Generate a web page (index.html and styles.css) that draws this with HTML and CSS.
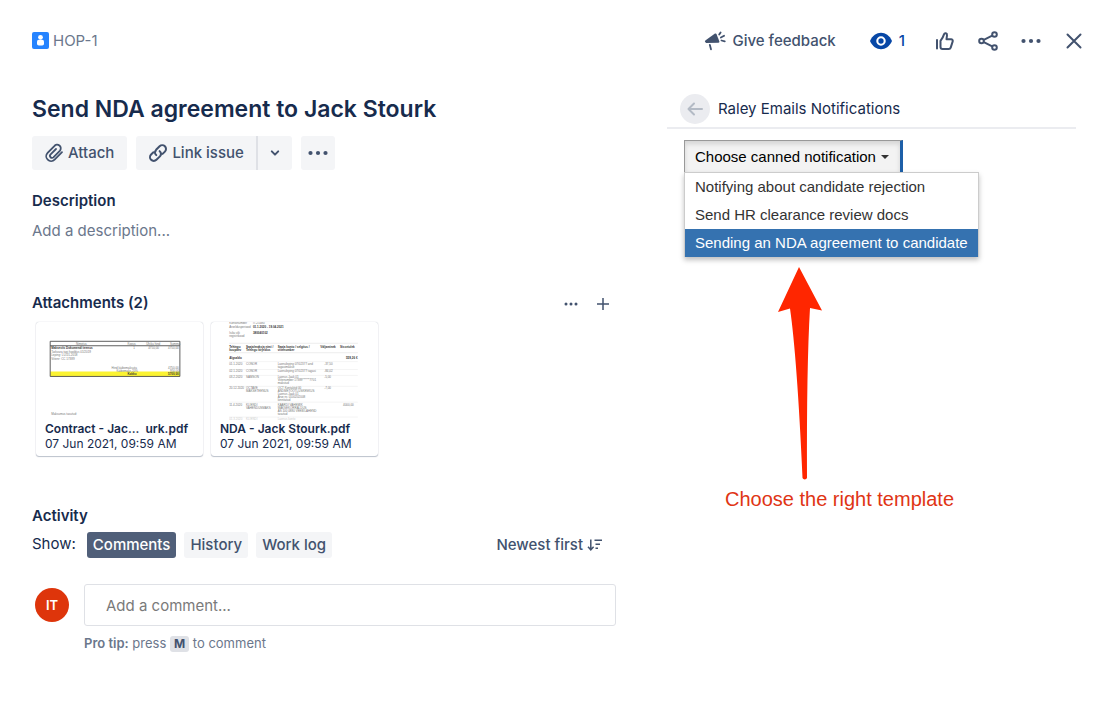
FILE: index.html
```html
<!DOCTYPE html>
<html lang="en">
<head>
<meta charset="utf-8">
<title>HOP-1 Send NDA agreement to Jack Stourk</title>
<link rel="stylesheet" href="styles.css">
</head>
<body>
<header class="topbar">
  <a class="issue-key" href="#">
    <svg width="17" height="17" viewBox="0 0 17 17"><rect width="17" height="17" rx="2" fill="#2684ff"/><circle cx="8.500" cy="5.300" r="2.400" fill="#fff"/><rect x="5" y="7.800" width="7" height="5.800" rx="1.800" fill="#fff"/></svg>
    HOP-1
  </a>
  <nav class="actions">
    <button class="plain feedback">
      <svg width="22" height="22" viewBox="0 0 22 22" fill="none" stroke="#42526e" stroke-width="1.800" stroke-linecap="round"><path d="M1.300 10.600 11 3.600Q12 3 12.500 4.100L15.400 11.500Q15.700 12.600 14.500 12.700L2.200 13.100Q0 12 1.300 10.600z" fill="#42526e" stroke="none"/><path d="M5.800 14.800 7 19.300M15.200 4.600l1.400-2.200M16.900 7.500l3.200-1.700M17.500 10.500l3.300.8"/></svg>
      Give feedback
    </button>
    <button class="plain watch" aria-label="1 watcher">
      <svg width="24" height="24" viewBox="0 0 24 24"><path d="M1 12C3.500 6.500 7.500 3.800 12 3.800S20.500 6.500 23 12C20.500 17.500 16.500 20.200 12 20.200S3.500 17.500 1 12z" fill="#0747a6"/><circle cx="12" cy="12" r="3.700" fill="none" stroke="#fff" stroke-width="2.100"/></svg>
      1
    </button>
    <button class="plain" aria-label="Like">
      <svg width="24" height="24" viewBox="0 0 24 24" fill="none" stroke="#42526e" stroke-width="2" stroke-linecap="round" stroke-linejoin="round"><path d="M4 11v8.500M7.500 11.800v6.200a2 2 0 0 0 2 2h6.300a2 2 0 0 0 1.900-1.400l2-6.200a1.700 1.700 0 0 0-1.600-2.200h-4.600l.5-3.900c.3-2.300-2.400-2.800-3-.9-.6 2-1.500 3.900-3.500 6.400z"/></svg>
    </button>
    <button class="plain" aria-label="Share">
      <svg width="24" height="24" viewBox="0 0 24 24" fill="none" stroke="#42526e" stroke-width="2"><circle cx="5.500" cy="12" r="2.300"/><circle cx="18.500" cy="5.500" r="2.300"/><circle cx="18.500" cy="18.500" r="2.300"/><path d="M7.800 10.900 16.200 6.700M7.800 13.100l8.400 4.200"/></svg>
    </button>
    <button class="plain" aria-label="More actions">
      <svg width="24" height="24" viewBox="0 0 24 24" fill="#42526e"><circle cx="4.500" cy="12" r="2.100"/><circle cx="12" cy="12" r="2.100"/><circle cx="19.500" cy="12" r="2.100"/></svg>
    </button>
    <button class="plain" aria-label="Close">
      <svg width="24" height="24" viewBox="0 0 24 24" fill="none" stroke="#42526e" stroke-width="2" stroke-linecap="round"><path d="M5.500 5.500l13 13M18.500 5.500l-13 13"/></svg>
    </button>
  </nav>
</header>

<div class="columns">
  <main>
    <h1>Send NDA agreement to Jack Stourk</h1>
    <div class="toolbar">
      <button class="tool">
        <svg width="20" height="20" viewBox="0 0 20 20" fill="none" stroke="#42526e" stroke-width="1.800" stroke-linecap="round"><path d="M18 9.200 10.600 16.600A4.800 4.800 0 0 1 3.600 9.800L10.300 3.100A3.500 3.500 0 0 1 16 7.600L9.400 14.300A2 2 0 0 1 6.600 11.400L12 6"/></svg>
        Attach
      </button>
      <div class="split">
        <button class="tool">
          <svg width="20" height="20" viewBox="0 0 20 20" fill="none" stroke="#42526e" stroke-width="2" stroke-linecap="round"><path d="M8.300 12.100a3.900 3.900 0 0 1-.2-5.300l3.500-3.500a3.700 3.700 0 0 1 5.300 5.300l-2.300 2.300M11.600 8.100a3.900 3.900 0 0 1 .3 5.300l-3.500 3.400a3.700 3.700 0 0 1-5.300-5.300L5.400 9.300"/></svg>
          Link issue
        </button>
        <button class="tool caret" aria-label="More link options">
          <svg width="10" height="10" viewBox="0 0 10 10" fill="none" stroke="#42526e" stroke-width="2" stroke-linecap="round" stroke-linejoin="round"><path d="M1.800 3.400 5 6.600l3.200-3.200"/></svg>
        </button>
      </div>
      <button class="tool more" aria-label="More">
        <svg width="20" height="20" viewBox="0 0 20 20" fill="#42526e"><circle cx="2.500" cy="10" r="2.100"/><circle cx="10" cy="10" r="2.100"/><circle cx="17.500" cy="10" r="2.100"/></svg>
      </button>
    </div>

    <section class="description">
      <h2>Description</h2>
      <p>Add a description...</p>
    </section>

    <section class="attachments">
      <div class="section-head">
        <h2>Attachments (2)</h2>
        <div class="section-tools">
          <button class="plain" aria-label="Attachment options"><svg width="16" height="16" viewBox="0 0 16 16" fill="#42526e"><circle cx="3" cy="9" r="1.500"/><circle cx="8" cy="9" r="1.500"/><circle cx="13" cy="9" r="1.500"/></svg></button>
          <button class="plain" aria-label="Add attachment"><svg width="16" height="16" viewBox="0 0 16 16" fill="none" stroke="#42526e" stroke-width="1.500"><path d="M8 3v12M2 9h12"/></svg></button>
        </div>
      </div>
      <div class="cards">
        <a class="card" href="#">
          <svg class="preview" viewBox="0 0 166 100" aria-hidden="true">
            <rect x="13" y="50" width="131" height="5" fill="#fbf332"/>
            <path d="M13 19.500h131v35.500H13zM13 24h131" fill="none" stroke="#4b4b4b" stroke-width=".9"/>
            <g class="tiny">
              <text x="39" y="23">Nimetus</text><text x="91" y="23">Kogus</text><text x="110" y="23">Ühiku hind</text><text x="134" y="23">Summa</text>
              <text class="strong" x="14" y="27.500">Makseviis Dokumendi teenus</text><text x="97" y="27.500">1</text><text x="112" y="27.500">4750,00</text><text x="132" y="27.500">4750,00</text>
              <text x="14" y="31">Tarkvara tugi hooldus 01/2019</text><text x="14" y="34.500">Leping: LU-01-2018</text><text x="14" y="38">Viitenr: CC 17389</text>
              <text x="75" y="47">Hind käibemaksuta</text><text x="132" y="47">4750,00</text><text x="80" y="50.500">Käibemaks 20%</text><text x="134" y="50.500">950,00</text>
              <text class="strong" x="91" y="54">Kokku</text><text class="strong" x="132" y="54">5700,00</text>
              <text x="14" y="94">Maksumus tasutud:</text>
            </g>
          </svg>
          <span class="card-text"><strong>Contract - Jac...&nbsp; urk.pdf</strong><span>07 Jun 2021, 09:59 AM</span></span>
        </a>
        <a class="card" href="#">
          <svg class="preview" viewBox="0 0 166 100" aria-hidden="true">
            <path d="M17 21.500h130M17 31h130" stroke="#ededed" fill="none"/><path d="M17 40h130M17 48h130M17 54h130M17 65h130M17 81h130M17 96h130" stroke="#f1f1f1" stroke-width=".7" fill="none"/>
            <g class="tiny">
              <text x="17" y="2">Kontonumber</text><text x="41" y="2">IT-25480</text>
              <text x="17" y="6.500">Arveldusperiood</text><text class="strong" x="41" y="6.500">01.1.2020 - 19.04.2021</text>
              <text x="17" y="12">Isiku või</text><text x="17" y="15">registrikood</text><text class="strong" x="41" y="12">380040102</text>
              <g class="strong"><text x="17" y="26">Tehingu</text><text x="17" y="29">kuupäev</text><text x="34" y="26">Saaja/maksja nimi /</text><text x="34" y="29">Tehingu kirjeldus</text><text x="66" y="26">Saaja konto / selgitus /</text><text x="66" y="29">viitenumber</text><text x="109" y="26">Väljaminek</text><text x="129" y="26">Sissetulek</text><text x="17" y="37">Algsaldo</text><text x="135" y="37">559,26 €</text></g>
              <text x="17" y="43">01.1.2020</text><text x="34" y="43">CONOR</text><text x="66" y="43">Laenuleping 07/02377 and</text><text x="66" y="46">tagasimakse</text><text x="113" y="43">-37,50</text>
              <text x="17" y="51">02.1.2020</text><text x="34" y="51">CONOR</text><text x="66" y="51">Laenuleping 07/02377 tagasi</text><text x="113" y="51">-84,02</text>
              <text x="17" y="57">03.2.2020</text><text x="34" y="57">SAMSON</text><text x="66" y="57">Laenus Jaak 01</text><text x="66" y="60">Viitenumber 17389******7701</text><text x="66" y="63">makstud</text><text x="113" y="57">-5,00</text>
              <text x="17" y="68">20.12.2020</text><text x="34" y="68">OCTAVE</text><text x="34" y="71">MAKSETEENUS</text><text x="66" y="68">OCT Kontaktid 00</text><text x="66" y="71">ANDMETÖÖTLUSKESKUS</text><text x="66" y="74">Laenus Jaak 01</text><text x="66" y="77">Arve nr. 0100202008</text><text x="66" y="80">kinnitatud</text><text x="113" y="68">-7,00</text>
              <text x="17" y="85">11.4.2020</text><text x="34" y="85">KLIENDI</text><text x="34" y="88">VAHENDUSMAKS</text><text x="66" y="85">KAARDI VAHEMIK</text><text x="66" y="88">MAKSEKORRALDUS</text><text x="66" y="91">AS 100 0880 VEEBILAHEND</text><text x="66" y="94">tasutud</text><text x="132" y="85">4000,00</text>
              <text class="faint" x="17" y="99">01.3.2020</text><text class="faint" x="34" y="99">KLIENDI</text><text class="faint" x="66" y="99">Laenus konto</text>
            </g>
          </svg>
          <span class="card-text"><strong>NDA - Jack Stourk.pdf</strong><span>07 Jun 2021, 09:59 AM</span></span>
        </a>
      </div>
    </section>

    <section class="activity">
      <h2>Activity</h2>
      <div class="filters">
        <span class="show">Show:</span>
        <button class="chip selected">Comments</button>
        <button class="chip">History</button>
        <button class="chip">Work log</button>
        <button class="plain sort">Newest first
          <svg width="16" height="16" viewBox="0 0 16 16" fill="none" stroke="#42526e" stroke-width="1.500"><path d="M3.800 2.500v10M1 9.800l2.800 3 2.800-3M7.500 3.300H15M8.500 7.300H13M8.500 11.300h2.500"/></svg>
        </button>
      </div>
      <div class="comment">
        <span class="avatar">IT</span>
        <div class="comment-body">
          <input type="text" placeholder="Add a comment..." aria-label="Add a comment">
          <p class="tip"><strong>Pro tip:</strong> press <kbd>M</kbd> to comment</p>
        </div>
      </div>
    </section>
  </main>

  <aside>
    <div class="panel-head">
      <button class="back" aria-label="Back"><svg width="18" height="18" viewBox="0 0 18 18" fill="none" stroke="#b3bac5" stroke-width="2" stroke-linecap="round" stroke-linejoin="round"><path d="M16 9H3M8 3.500 2.500 9 8 14.500"/></svg></button>
      <h3>Raley Emails Notifications</h3>
    </div>
    <div class="panel-body">
      <button class="dropdown" aria-expanded="true">Choose canned notification <span class="triangle"></span></button>
      <div class="menu">
        <button>Notifying about candidate rejection</button>
        <button>Send HR clearance review docs</button>
        <button class="active">Sending an NDA agreement to candidate</button>
      </div>
      <div class="callout">
        <svg width="46" height="214" viewBox="0 0 46 214"><path d="M22 0 45 43.500 33 41Q29.500 100 30 211a2.500 2.500 0 0 1-4.500 0Q20 90 13 41.500L1 45z" fill="#ff2600"/></svg>
        <p>Choose the right template</p>
      </div>
    </div>
  </aside>
</div>
</body>
</html>
```

FILE: styles.css
```css
* { box-sizing: border-box; }
body {
  margin: 0;
  background: #fff;
  color: #172b4d;
  font-family: Inter, "Liberation Sans", sans-serif;
  font-size: 15px;
  line-height: 20px;
}
h1, h2, h3, p { margin: 0; }
svg { display: block; flex: none; }
a { color: inherit; text-decoration: none; }
button { font: inherit; color: #42526e; border: 0; margin: 0; padding: 0; cursor: pointer; }
.plain { display: flex; align-items: center; background: none; }

.topbar { display: flex; justify-content: space-between; align-items: center; padding: 25px 14px 0 32px; height: 56px; }
.issue-key { display: flex; align-items: center; gap: 4px; color: #6b778c; }
.actions { display: flex; align-items: center; gap: 19px; }
.feedback { gap: 6px; margin-right: 14px; font-weight: 500; }
.watch { gap: 6px; padding-right: 9px; color: #0747a6; font-weight: 500; }

.columns { display: grid; grid-template-columns: 584fr 409fr; gap: 51px; padding: 37px 24px 24px 32px; }
h1 { font-size: 23px; line-height: 32px; font-weight: 600; }
h2 { font-size: 15px; line-height: 20px; font-weight: 600; }

.toolbar { display: flex; gap: 9px; margin-top: 11px; }
.tool { display: flex; align-items: center; gap: 4px; height: 34px; padding: 0 13px 0 12px; border-radius: 3px; background: #f4f5f7; font-weight: 500; }
.split { display: flex; }
.split .tool:first-child { border-radius: 3px 0 0 3px; padding-right: 12px; }
.split .caret { border-left: 2px solid #dfe1e6; border-radius: 0 3px 3px 0; padding: 0 12px; }
.tool.more { padding: 0 7px; }

.description { margin-top: 21px; }
.description p { margin-top: 10px; color: #6b778c; }

.attachments { margin-top: 52px; }
.section-head { display: flex; justify-content: space-between; padding-right: 5px; }
.section-tools { display: flex; gap: 16px; }
.cards { display: flex; gap: 8px; margin: 9px 0 0 4px; }
.card { width: 167px; height: 134px; overflow: hidden; border-radius: 3px; background: #fff; box-shadow: 0 1px 1px rgba(9, 30, 66, .25), 0 0 1px rgba(9, 30, 66, .31); font-size: 12px; line-height: 15px; }
.preview { width: 100%; height: 99px; }
.card-text { display: flex; flex-direction: column; padding-left: 9px; }
.card-text strong { font-weight: 600; }
.tiny { font-family: "Liberation Sans", sans-serif; font-size: 3px; fill: #777; }
.strong { font-weight: 700; fill: #333; }
.faint { opacity: .4; }

.activity { margin-top: 50px; }
.filters { display: flex; align-items: center; gap: 8px; margin-top: 6px; }
.show { align-self: flex-start; margin-right: 3px; line-height: 24px; }
.chip { height: 26px; padding: 0 6px; border-radius: 3px; background: #f4f5f7; font-weight: 500; }
.chip.selected { background: #505f79; color: #fff; }
.sort { gap: 4px; margin: 0 13px 0 auto; font-weight: 500; }
.comment { display: flex; gap: 15px; margin: 26px 0 0 3px; }
.avatar { display: grid; place-items: center; width: 34px; height: 34px; margin-top: 4px; border-radius: 50%; background: #de350b; color: #fff; font-size: 13px; font-weight: 600; }
.comment-body { flex: 1; }
.comment-body input { display: block; width: 100%; height: 42px; padding: 0 21px; border: 1px solid #dfe1e6; border-radius: 3px; font: inherit; }
.comment-body input::placeholder { color: #7a7a7a; opacity: 1; }
.tip { margin-top: 9px; color: #6b778c; font-size: 13px; line-height: 16px; }
.tip strong { font-weight: 600; }
kbd { display: inline-block; padding: 0 4px; border-radius: 3px; background: #dfe1e6; color: #42526e; font: inherit; font-size: 12px; font-weight: 700; }

.panel-head { display: flex; align-items: center; gap: 8px; padding: 1px 0 3px 13px; border-bottom: 2px solid #ebecf0; }
.panel-head h3 { font-size: 15px; font-weight: 400; }
.back { display: grid; place-items: center; width: 30px; height: 30px; border-radius: 50%; background: #ebecf0; }
.panel-body { padding: 11px 0 0 17px; font-family: "Liberation Sans", Arial, sans-serif; }
.dropdown { display: flex; align-items: center; gap: 5px; height: 32px; padding: 0 11px 0 10px; border: 1px solid #999; border-right: 3px solid #1d5fa8; border-bottom: 0; background: #f3f3f3; box-shadow: inset 0 3px 5px rgba(0, 0, 0, .13); color: #000; }
.triangle { border: 4px solid transparent; border-top-color: #333; border-bottom: 0; }
.menu { display: flex; flex-direction: column; width: fit-content; border: 1px solid #ccc; border-bottom: 0; box-shadow: 0 3px 5px rgba(0, 0, 0, .25); background: #fff; }
.menu button { height: 28px; padding: 0 10px; background: none; color: #333; text-align: left; white-space: nowrap; }
.menu .active { background: #3572b0; color: #fff; }
.callout { margin-top: 10px; padding-left: 41px; color: #e03414; font-size: 20px; line-height: 24px; }
.callout svg { margin-left: 52px; }
.callout p { margin-top: 6px; }
```
